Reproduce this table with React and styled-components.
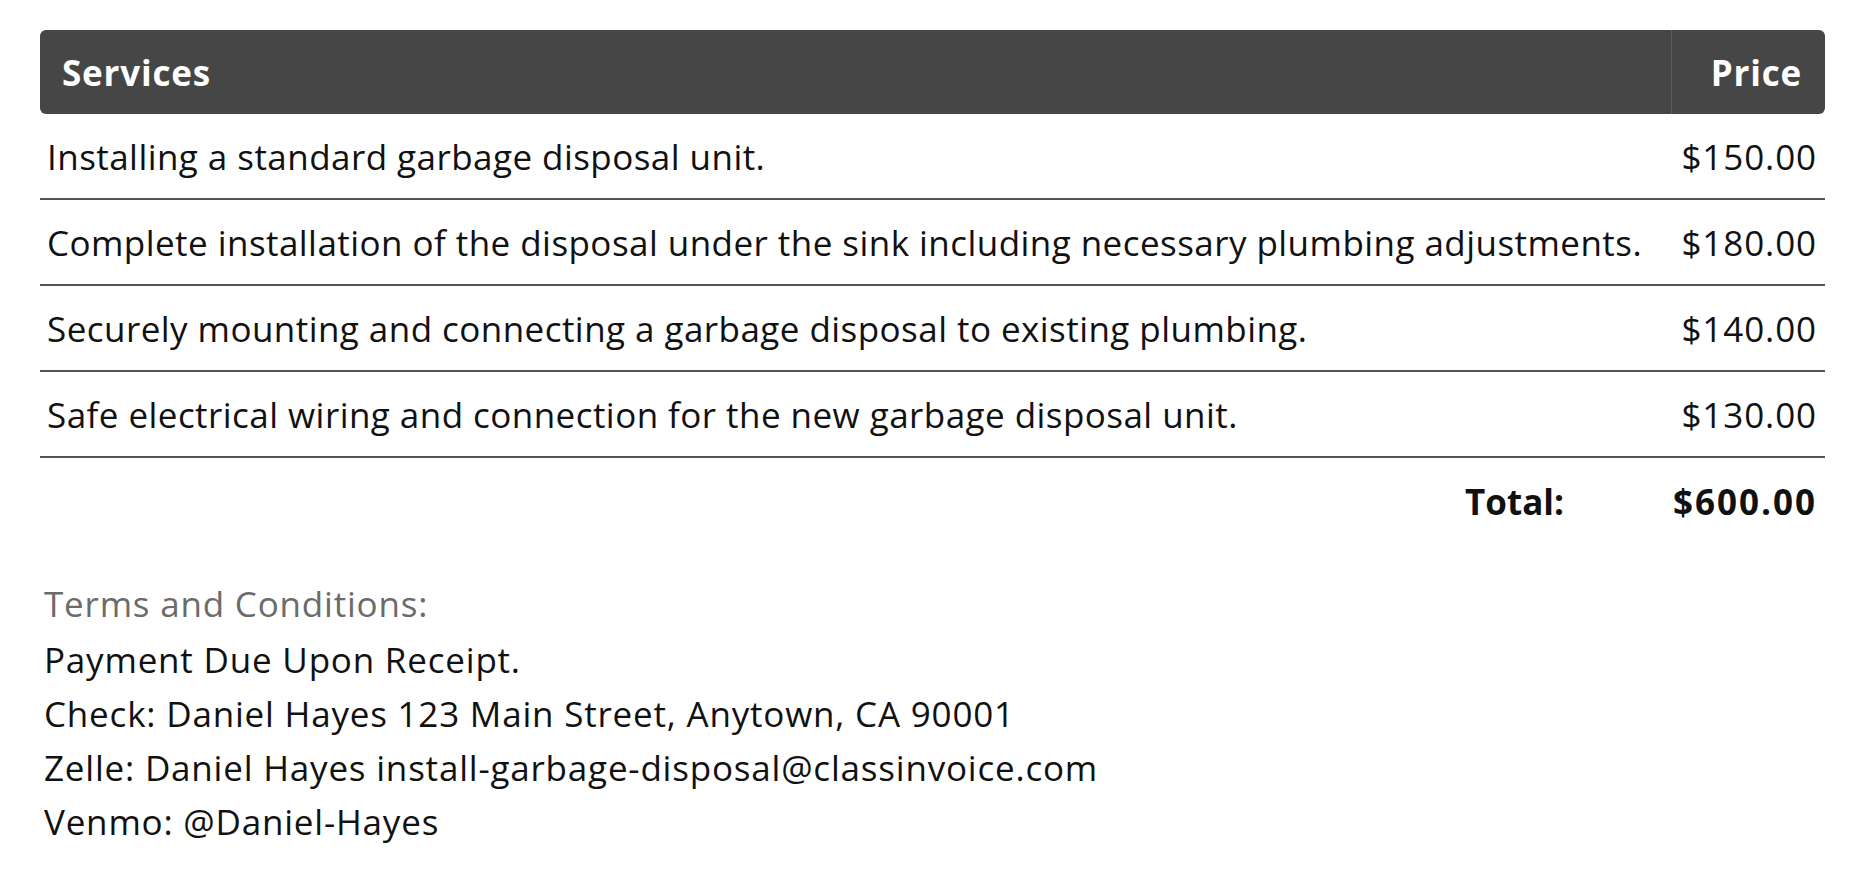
import React from "react";
import styled, { createGlobalStyle } from "styled-components";

const Global = createGlobalStyle`
  html, body { margin: 0; padding: 0; background: #fff; }
  body { font-family: "Open Sans", "Noto Sans", sans-serif; color: #111; letter-spacing: 0.45px; }
`;

const Page = styled.div`
  padding: 30px 43px 0 40px;
`;

const Table = styled.div`
  display: flex;
  flex-direction: column;
`;

const HeadRow = styled.div`
  display: grid;
  grid-template-columns: 1fr 154px;
  height: 84px;
  background: #464646;
  border-radius: 6px;
  color: #fff;
  font-weight: 700;
  font-size: 35px;
  letter-spacing: 0.8px;
`;

const HeadCell = styled.div`
  display: flex;
  align-items: center;
  justify-content: ${(p) => (p.$right ? "flex-end" : "flex-start")};
  padding: ${(p) => (p.$right ? "0 23px 0 0" : "0 0 0 22px")};
  border-left: ${(p) => (p.$right ? "1px solid #5c5c5c" : "none")};
`;

const Row = styled.div`
  display: grid;
  grid-template-columns: 1fr 154px;
  height: 86px;
  box-sizing: border-box;
  border-bottom: ${(p) => (p.$noLine ? "none" : "2px solid #555")};
  font-size: 35px;
  font-weight: ${(p) => (p.$bold ? 700 : 500)};
`;

const Cell = styled.div`
  display: flex;
  align-items: center;
  justify-content: ${(p) => (p.$right ? "flex-end" : "flex-start")};
  padding: ${(p) => p.$pad || "0 0 0 7px"};
  letter-spacing: ${(p) => p.$ls || "0.45px"};
  white-space: nowrap;
`;

const Terms = styled.div`
  margin-top: 33px;
  padding-left: 4px;
  display: flex;
  flex-direction: column;
  font-size: 35px;
  font-weight: 500;
  line-height: 54px;
  letter-spacing: 0.8px;
`;

const TermsTitle = styled.div`
  color: #6b6b6b;
  margin-bottom: 2px;
`;

const Line = styled.div`
  color: #111;
`;

const services = [
  ["Installing a standard garbage disposal unit.", "$150.00"],
  ["Complete installation of the disposal under the sink including necessary plumbing adjustments.", "$180.00"],
  ["Securely mounting and connecting a garbage disposal to existing plumbing.", "$140.00"],
  ["Safe electrical wiring and connection for the new garbage disposal unit.", "$130.00"],
];

export default function App() {
  return (
    <Page>
      <Global />
      <Table>
        <HeadRow>
          <HeadCell>Services</HeadCell>
          <HeadCell $right>Price</HeadCell>
        </HeadRow>
        {services.map(([d, p]) => (
          <Row key={d}>
            <Cell>{d}</Cell>
            <Cell $right $pad="0 8px 0 0" $ls="0.9px">{p}</Cell>
          </Row>
        ))}
        <Row $noLine $bold>
          <Cell $right $pad="0 107px 0 0" $ls="0px">Total:</Cell>
          <Cell $right $pad="0 8px 0 0" $ls="2px">$600.00</Cell>
        </Row>
      </Table>
      <Terms>
        <TermsTitle>Terms and Conditions:</TermsTitle>
        <Line>Payment Due Upon Receipt.</Line>
        <Line>Check: Daniel Hayes 123 Main Street, Anytown, CA 90001</Line>
        <Line>Zelle: Daniel Hayes install-garbage-disposal@classinvoice.com</Line>
        <Line>Venmo: @Daniel-Hayes</Line>
      </Terms>
    </Page>
  );
}
